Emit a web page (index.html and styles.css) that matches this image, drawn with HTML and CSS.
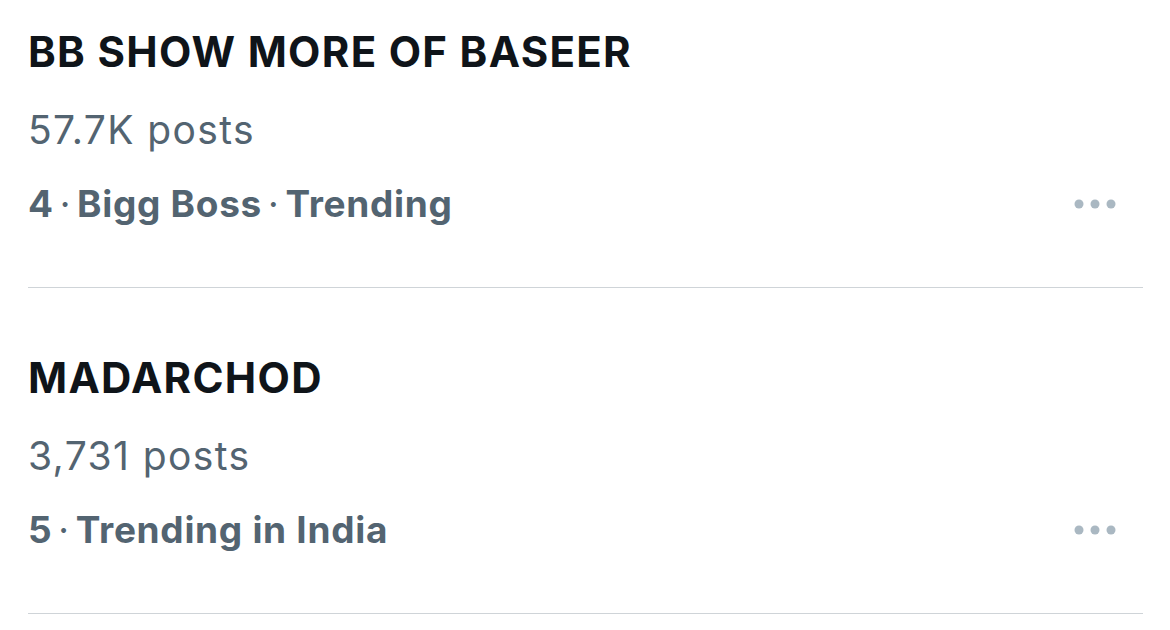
FILE: index.html
```html
<!DOCTYPE html>
<html>
<head>
<meta charset="utf-8">
<link rel="stylesheet" href="styles.css">
</head>
<body>
<div class="list">
  <div class="trend">
    <div class="title">BB SHOW MORE OF BASEER</div>
    <div class="count">57.7K posts</div>
    <div class="meta-row">
      <div class="meta">4<span class="sep">·</span>Bigg Boss<span class="sep">·</span>Trending</div>
      <svg class="more" width="42" height="10" viewBox="0 0 42 10"><circle cx="5" cy="5" r="4.5"/><circle cx="21" cy="5" r="4.5"/><circle cx="37" cy="5" r="4.5"/></svg>
    </div>
  </div>
  <div class="trend">
    <div class="title">MADARCHOD</div>
    <div class="count">3,731 posts</div>
    <div class="meta-row">
      <div class="meta">5<span class="sep">·</span>Trending in India</div>
      <svg class="more" width="42" height="10" viewBox="0 0 42 10"><circle cx="5" cy="5" r="4.5"/><circle cx="21" cy="5" r="4.5"/><circle cx="37" cy="5" r="4.5"/></svg>
    </div>
  </div>
</div>
</body>
</html>
```
FILE: styles.css
```css
html, body {
  margin: 0;
  padding: 0;
  background: #ffffff;
}
body {
  font-family: Inter, "Liberation Sans", sans-serif;
  width: 1170px;
  height: 630px;
  overflow: hidden;
}
.list {
  margin-left: 28px;
  width: 1115px;
}
.trend {
  display: flex;
  flex-direction: column;
  padding-top: 66px;
  padding-bottom: 61px;
  border-bottom: 1px solid #cfd4d8;
}
.trend:first-child {
  padding-top: 28px;
}
.title {
  font-size: 42px;
  line-height: 48px;
  font-weight: 700;
  color: #0f1419;
  letter-spacing: 1.3px;
}
.count {
  margin-top: 31px;
  font-size: 39px;
  line-height: 46px;
  color: #536471;
  letter-spacing: 1.4px;
}
.meta-row {
  margin-top: 29px;
  display: flex;
  align-items: center;
  justify-content: space-between;
}
.meta {
  font-size: 37px;
  line-height: 44px;
  font-weight: 700;
  color: #536471;
  letter-spacing: 0.7px;
}
.sep {
  font-weight: 400;
  margin: 0 6px;
}
.more {
  fill: #aab8c2;
  margin-right: 27px;
}
```
